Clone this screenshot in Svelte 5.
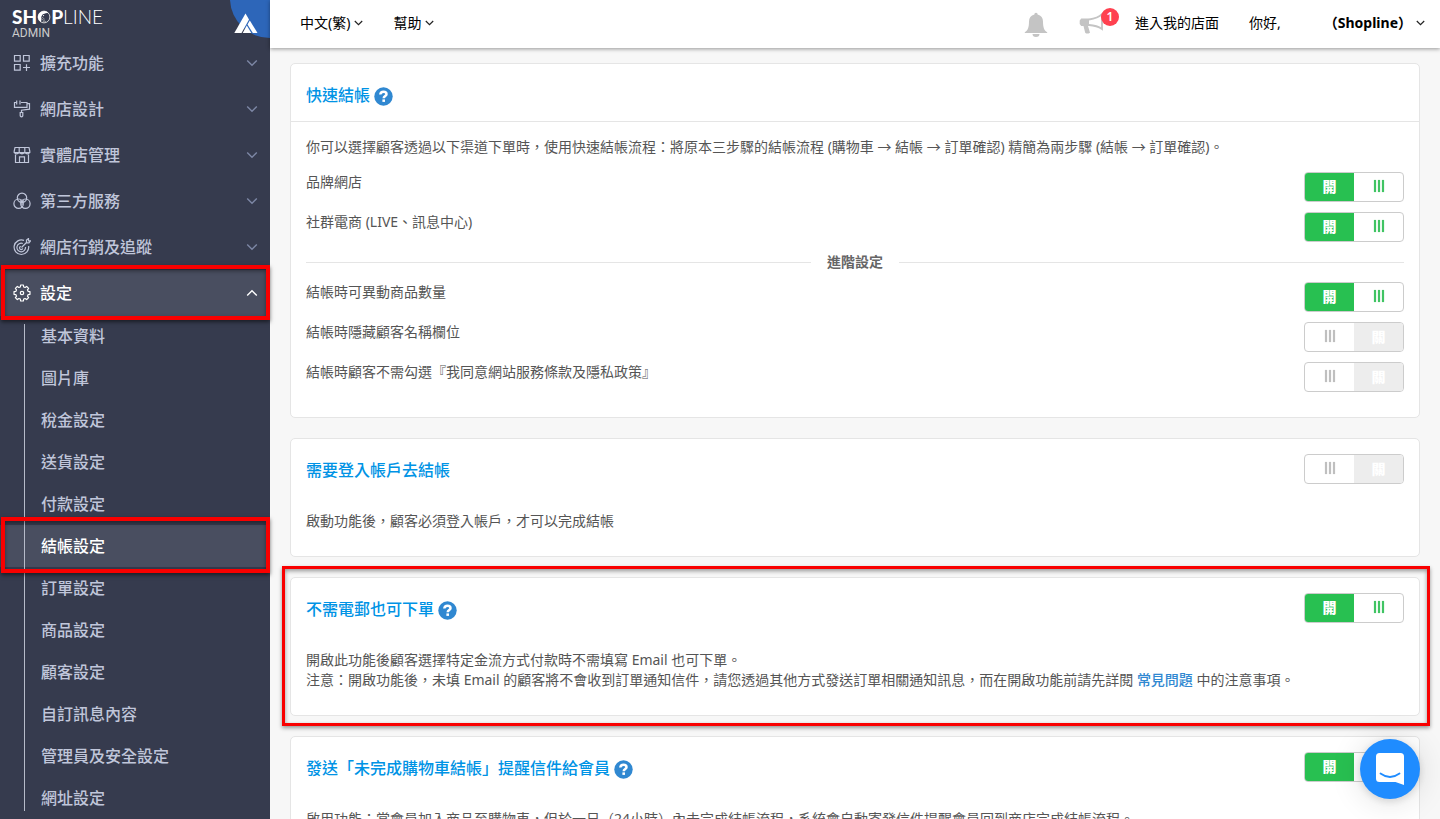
<script>
  const menu = [
    { label: '擴充功能', icon: 'grid' },
    { label: '網店設計', icon: 'roller' },
    { label: '實體店管理', icon: 'store' },
    { label: '第三方服務', icon: 'rings' },
    { label: '網店行銷及追蹤', icon: 'target' },
    { label: '設定', icon: 'gear', open: true },
  ];
  const sub = ['基本資料', '圖片庫', '稅金設定', '送貨設定', '付款設定', '結帳設定', '訂單設定', '商品設定', '顧客設定', '自訂訊息內容', '管理員及安全設定', '網址設定'];
  const current = '結帳設定';

  // Eight-toothed outline, four points per tooth.
  const gear = 'M' + Array.from({ length: 32 }, (_, i) => {
    const tooth = Math.floor(i / 4);
    const [turn, r] = [[-0.27, 6.3], [-0.17, 8.1], [0.17, 8.1], [0.27, 6.3]][i % 4];
    const a = (tooth * Math.PI) / 4 + turn;
    return `${(9 + r * Math.sin(a)).toFixed(2)} ${(9 - r * Math.cos(a)).toFixed(2)}`;
  }).join('L') + 'Z';

  let basic = $state([
    { label: '品牌網店', on: true },
    { label: '社群電商 (LIVE、訊息中心)', on: true },
  ]);
  let advanced = $state([
    { label: '結帳時可異動商品數量', on: true },
    { label: '結帳時隱藏顧客名稱欄位', on: false },
    { label: '結帳時顧客不需勾選『我同意網站服務條款及隱私政策』', on: false },
  ]);
  let login = $state({ label: '需要登入帳戶去結帳', on: false });
  let noEmail = $state({ label: '不需電郵也可下單', on: true });
  let reminder = $state({ label: '發送「未完成購物車結帳」提醒信件給會員', on: true });
</script>

{#snippet toggle(item)}
  <button class="switch" class:on={item.on} role="switch" aria-checked={item.on} aria-label={item.label} onclick={() => (item.on = !item.on)}>
    {#if item.on}<span class="state">開</span>{/if}
    <span class="grip"><i></i><i></i><i></i></span>
    {#if !item.on}<span class="state">關</span>{/if}
  </button>
{/snippet}

{#snippet help()}
  <button class="help" aria-label="說明">
    <svg width="19" height="19" viewBox="0 0 19 19"><circle cx="9.500" cy="9.500" r="9.200" fill="#3088d1" /><path d="M6.300 7.500C6.500 5.500 7.700 4.800 9.500 4.800C11.500 4.800 12.500 5.800 12.500 7.200C12.500 9 9.700 9 9.700 11.200" fill="none" stroke="#fff" stroke-width="2.500" /><rect x="8.400" y="12.400" width="2.600" height="2.500" fill="#fff" /></svg>
  </button>
{/snippet}

{#snippet chevron(up)}
  <svg class="chev" width="12" height="8" viewBox="0 0 12 8"><path d={up ? 'M1.200 6.500 6 1.700l4.800 4.800' : 'M1.200 1.500 6 6.300l4.800-4.800'} /></svg>
{/snippet}

{#snippet caret()}
  <svg class="caret" width="9" height="6" viewBox="0 0 9 6"><path d="M.8 1 4.500 4.700 8.200 1" /></svg>
{/snippet}

<div class="page" lang="zh-Hant">
  <aside>
    <a class="brand" href="#home" aria-label="SHOPLINE ADMIN">
      <span class="logo"><b>SH</b><svg width="14" height="16" viewBox="0 0 15 16"><circle cx="7.500" cy="8" r="6.300" fill="none" stroke="#ddd" stroke-width="1" /><path d="M1 8.500A6.500 6.500 0 0 1 12.500 4Q10 3.200 8 4.600Q6 4.500 5.300 6.500Q4 8 4.800 10L4.300 13.600A6.500 6.500 0 0 1 1 8.500Z" fill="#fff" /><path d="M5 10l5 3.500M6 12.500l3.500 1.500M5.300 8l3 2.500" stroke="#bbb" stroke-width=".7" /><circle cx="7" cy="6.500" r=".7" fill="#fff" /></svg><b>P</b><span>LINE</span></span>
      <span class="admin">ADMIN</span>
    </a>
    <div class="corner">
      <svg width="40" height="40" viewBox="0 0 40 40"><path d="M0 0H40V38A40 40 0 0 1 0 0Z" fill="#2d66b9" /><path d="M4.300 33 15.500 13.500 19 19.500 11.500 33Z" fill="#fff" /><path d="M19.800 20.500 27.500 33H22.800L17.500 24.500Z" fill="#fff" /><path d="M16.800 25.500 21.300 33H12.700Z" fill="#fff" /></svg>
    </div>
    <nav>
      {#each menu as m}
        <button class="item" class:open={m.open} aria-expanded={!!m.open}>
          <svg class="icon" width="18" height="18" viewBox="0 0 18 18">
            {#if m.icon === 'grid'}
              <path d="M1.500 1.500h5.700v5.700H1.500zM10.500 1.500h5.700v5.700h-5.700zM1.500 10.500h5.700v5.700H1.500zM13.500 10.200v6.800M10 13.500h7" />
            {:else if m.icon === 'roller'}
              <path d="M4 2.500H1.500v4.800H14V2.500H8M14 3.700h2.500v5.500l-8 1v2M3.700.5v4M7 .5v4M7.200 12.500h2.600v3.300q-1.300 2-2.600 0z" />
            {:else if m.icon === 'store'}
              <path d="M2 1.500h14l.8 3.500v1.500H1.200V5zM6.200 1.500v5M11.800 1.500v5M1.200 6.500q2.500 2.500 5 0 2.800 2.500 5.600 0 2.500 2.500 5 0M2.500 8.500v8h13v-8M6.500 16.500v-5.700h5v5.700" />
            {:else if m.icon === 'rings'}
              <circle cx="9" cy="5.800" r="4.700" /><circle cx="5.600" cy="11.700" r="4.700" /><circle cx="12.400" cy="11.700" r="4.700" /><path d="M7 8.500l2 1.500 2-1.500M9 10v3" />
            {:else if m.icon === 'target'}
              <path d="M11 2.400A7.300 7.300 0 1 0 15.600 8M9.800 5.500A4.300 4.300 0 1 0 12.500 9M7.800 8.400A1.600 1.600 0 1 0 9.700 10.300M8.500 9.500l5-5M13.500 4.700V2l2-1.500v2.300h2.200l-1.700 2h-2.500" />
            {:else}
              <path d={gear} stroke-linejoin="round" /><circle cx="9" cy="9" r="1.700" />
            {/if}
          </svg>
          <span>{m.label}</span>
          {@render chevron(m.open)}
        </button>
      {/each}
      <ul>
        {#each sub as s}
          <li><a href="#settings" class:current={s === current}>{s}</a></li>
        {/each}
      </ul>
    </nav>
  </aside>

  <div class="body">
    <header>
      <button class="lang">中文(繁){@render caret()}</button>
      <button>幫助{@render caret()}</button>
      <div class="right">
        <button class="bell" aria-label="通知"><svg width="24" height="26" viewBox="0 0 24 26"><path d="M12 .8c1 0 1.600.7 1.600 1.700 3.600.8 5.400 3.500 5.400 7 0 6 1.200 9 4.200 10.800V21H.8v-.7C3.800 18.500 5 15.500 5 9.500c0-3.500 1.800-6.200 5.400-7C10.400 1.500 11 .8 12 .8ZM8.500 22h7a3.500 3 0 0 1-7 0Z" fill="#c4c4c4" /></svg></button>
        <button class="horn" aria-label="公告"><svg width="26" height="24" viewBox="0 0 26 24"><path d="M2.200 6.500H10v7.500H9l2 6.700q-3 1.800-4.800 0L4.500 14H2.200L.7 12V8.500Z" fill="#c4c4c4" /><path d="M10 7.500Q19 6.200 23 2.200V17Q18 13.500 10 13" fill="none" stroke="#c4c4c4" stroke-width="1.800" /></svg><span class="badge">1</span></button>
        <a href="#shop">進入我的店面</a>
        <span class="hello">你好,</span>
        <button class="user"><b>（Shopline）</b>{@render caret()}</button>
      </div>
    </header>

    <main>
      <section class="fast">
        <h2>快速結帳{@render help()}</h2>
        <div class="options">
          <p>你可以選擇顧客透過以下渠道下單時，使用快速結帳流程：將原本三步驟的結帳流程 (購物車 → 結帳 → 訂單確認) 精簡為兩步驟 (結帳 → 訂單確認)。</p>
          {#each basic as o}
            <div class="option"><span>{o.label}</span>{@render toggle(o)}</div>
          {/each}
          <h3>進階設定</h3>
          {#each advanced as o}
            <div class="option"><span>{o.label}</span>{@render toggle(o)}</div>
          {/each}
        </div>
      </section>

      <section class="card">
        <div class="head"><h2>{login.label}</h2>{@render toggle(login)}</div>
        <p>啟動功能後，顧客必須登入帳戶，才可以完成結帳</p>
      </section>

      <section class="card marked">
        <div class="head"><h2>{noEmail.label}{@render help()}</h2>{@render toggle(noEmail)}</div>
        <p>開啟此功能後顧客選擇特定金流方式付款時不需填寫 Email 也可下單。<br />注意：開啟功能後，未填 Email 的顧客將不會收到訂單通知信件，請您透過其他方式發送訂單相關通知訊息，而在開啟功能前請先詳閱 <a href="#faq">常見問題</a> 中的注意事項。</p>
      </section>

      <section class="card">
        <div class="head"><h2>{reminder.label}{@render help()}</h2>{@render toggle(reminder)}</div>
        <p>啟用功能：當會員加入商品至購物車，但於一日（24小時）內未完成結帳流程，系統會自動寄發信件提醒會員回到商店完成結帳流程。</p>
      </section>
    </main>
  </div>

  <button class="chat" aria-label="聊天">
    <svg width="28" height="32" viewBox="0 0 28 32"><path d="M3.500 0h21A3.500 3.500 0 0 1 28 3.500V32L19.500 29h-16A3.500 3.500 0 0 1 0 25.500v-22A3.500 3.500 0 0 1 3.500 0Z" fill="#fff" /><path d="M4.500 20.500q9.500 7 19 0" fill="none" stroke="#1f8cff" stroke-width="1.800" stroke-linecap="round" /></svg>
  </button>
</div>

<style>
  :global(body) { overflow: hidden; }
  .page { display: flex; height: 100vh; overflow: hidden; background: #f7f7f7; color: #555; font: 14px/20px "Noto Sans", "Noto Sans CJK TC", sans-serif; }
  button { border: 0; padding: 0; background: none; color: inherit; font: inherit; cursor: pointer; }
  a { color: inherit; text-decoration: none; }
  h2, h3, p, ul { margin: 0; padding: 0; }
  svg { flex: none; }

  aside { position: relative; flex: none; width: 270px; background: #363b4e; color: #c0c6da; font-weight: 500; }
  .brand { display: block; height: 32px; padding: 8px 12px 0; color: #fff; }
  .logo { display: flex; align-items: center; height: 17px; font: 19px/17px Lato, sans-serif; }
  .logo b { font-weight: 900; }
  .logo span { font-weight: 300; }
  .admin { display: block; color: #ccc; font: 12px/17px Roboto, sans-serif; }
  .corner { position: absolute; top: 0; right: 0; height: 40px; }
  .item { display: flex; align-items: center; box-sizing: border-box; width: 100%; height: 46px; padding: 0 12px 0 13px; font-size: 16px; line-height: 24px; text-align: left; }
  .item span { flex: 1; margin-left: 9px; }
  .icon { fill: none; stroke: currentColor; stroke-width: 1.2; }
  .chev { fill: none; stroke: #7d87a5; stroke-width: 1.4; }
  .item.open { color: #fff; background: #494e60; }
  .item.open .chev { stroke: #fff; }
  .open, .current { position: relative; }
  .open::after, .current::after { content: ""; position: absolute; inset: -5px 0 -4px 1px; border: 4px solid #f90000; box-shadow: 0 2px 4px #0008, inset 0 2px 4px #0006; z-index: 2; }
  .current::after { inset: -8px 0 -6px 1px; }
  ul { position: relative; margin-top: -1px; list-style: none; }
  ul::before { content: ""; position: absolute; z-index: 1; left: 24px; top: 9px; width: 1px; height: 487px; background: #b6bbc9; }
  li a { display: block; height: 42px; padding-left: 41px; font-size: 16px; line-height: 42px; }
  li a.current { color: #fff; background: #494e60; }

  .body { flex: 1; min-width: 0; }
  header { position: relative; display: flex; align-items: center; box-sizing: border-box; height: 48px; padding: 0 15px 2px 30px; background: #fff; color: #000; box-shadow: 0 1px 4px #0006; }
  header button { display: flex; align-items: center; gap: 4px; }
  .lang { margin-right: 30px; }
  .caret { fill: none; stroke: #222; stroke-width: 1.2; }
  .right { display: flex; align-items: center; margin-left: auto; }
  .bell { padding-top: 3px; }
  .horn { position: relative; margin: 0 30px 0 31px; padding-top: 2px; }
  .badge { position: absolute; left: 22px; top: -2px; width: 18px; height: 18px; border-radius: 50%; background: #ff4150; color: #fff; font-size: 12px; font-weight: 600; line-height: 18px; text-align: center; }
  .hello { margin: 0 43px 0 30px; }

  main { display: flex; flex-direction: column; gap: 20px; padding: 15px 20px; }
  section { border: 1px solid #e5e5e5; border-radius: 5px; background: #fff; }
  h2 { display: flex; align-items: center; gap: 4px; color: #0093e5; font-size: 16px; font-weight: 500; line-height: 32px; }
  .help { display: flex; margin-top: 2px; }
  .fast h2 { padding: 15px 15px 10px; border-bottom: 1px solid #e5e5e5; }
  .options { padding: 15px; }
  .options p { margin-bottom: 15px; }
  .option { display: flex; justify-content: space-between; height: 40px; }
  h3 { display: flex; align-items: center; gap: 16px; margin-bottom: 10px; color: #666; font-size: 14px; font-weight: 700; line-height: 20px; }
  h3::before, h3::after { content: ""; flex: 1; height: 1px; background: #e5e5e5; }
  .card { position: relative; padding: 15px 15px 25px; }
  .head { display: flex; justify-content: space-between; }
  .card p { margin-top: 25px; }
  p a { color: #3088d1; font-weight: 500; }
  .marked::after { content: ""; position: absolute; inset: -12px -11px -11px -9px; border: 3px solid #f90000; box-shadow: 0 2px 4px #0006, inset 0 2px 4px #0006; pointer-events: none; }

  .switch { display: flex; flex: none; box-sizing: border-box; width: 100px; height: 30px; border: 1px solid #ccc; border-radius: 4px; overflow: hidden; background: #fff; color: #fff; }
  .state { width: 49px; height: 28px; background: #ededed; font-weight: 900; line-height: 28px; }
  .on .state { background: #28c051; }
  .grip { display: flex; justify-content: center; align-items: center; gap: 2px; box-sizing: border-box; width: 49px; height: 28px; padding-bottom: 2px; color: #bfbfbf; }
  .grip i { width: 2px; height: 12px; background: currentColor; box-shadow: 0 0 1px currentColor; }
  .on .grip { color: #40c463; }

  .chat { position: fixed; right: 20px; bottom: 20px; display: flex; align-items: center; justify-content: center; width: 60px; height: 60px; border-radius: 50%; background: #1f8cff; box-shadow: 0 2px 8px #0002, 0 2px 32px #0002; }
</style>
